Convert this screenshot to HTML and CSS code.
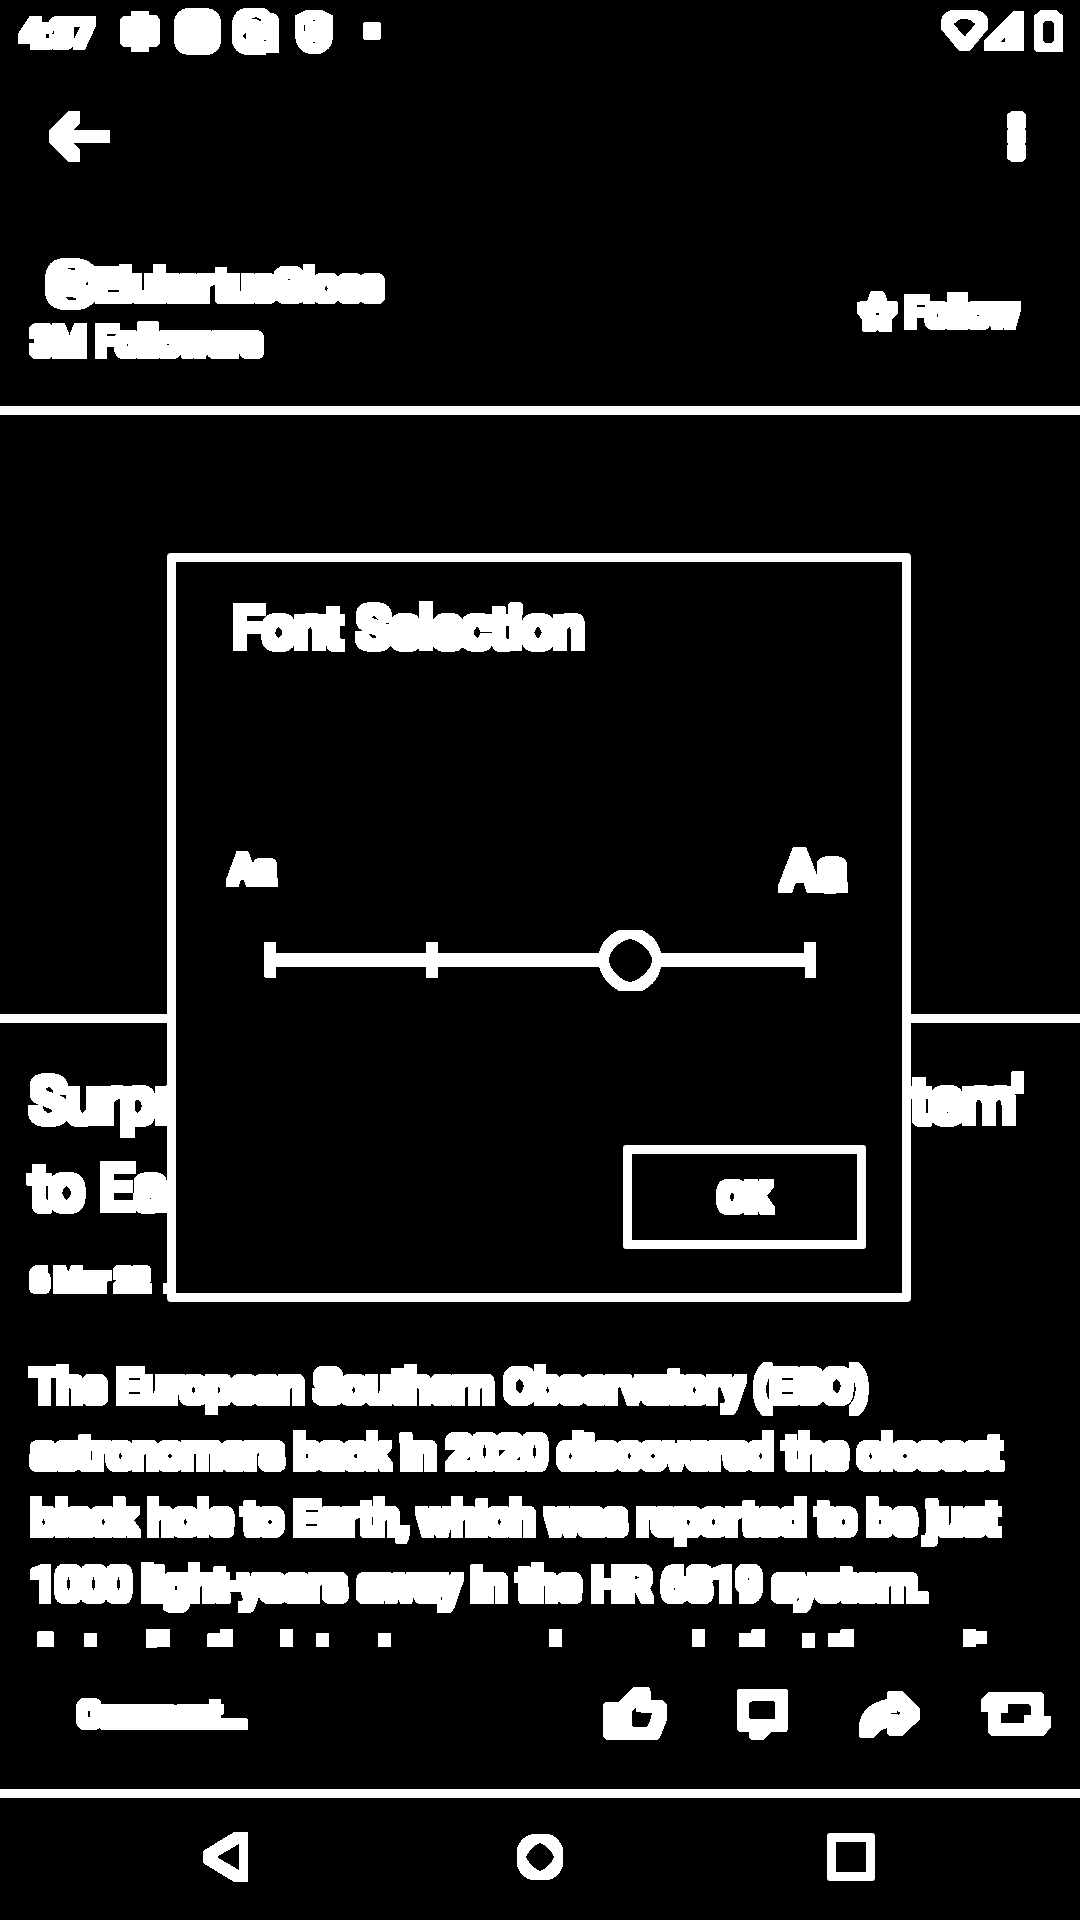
FILE: index.html
```html
<!DOCTYPE html>
<html lang="en">
<head>
<meta charset="utf-8">
<title>Font Selection</title>
<link rel="stylesheet" href="styles.css">
</head>
<body>
<svg class="defs" width="0" height="0" aria-hidden="true">
  <filter id="thick" x="-10%" y="-30%" width="120%" height="160%">
    <feMorphology operator="dilate" radius="4"/>
    <feComponentTransfer><feFuncA type="discrete" tableValues="0 1 1 1"/></feComponentTransfer>
  </filter>
</svg>
<div class="screen">
  <header class="status">
    <span class="time thick">4:37</span>
    <svg class="notices" width="261" height="60" viewBox="360 0 783 180">
      <path d="M393 33H447V46H470L480 58V132L470 142H447V156H393V142H370L360 132V58L370 48H393Z"/>
      <path d="M565 24H621Q662 30 663 68V122Q660 160 621 165H565Q524 160 522 122V68Q526 28 565 24Z"/>
      <path fill-rule="evenodd" d="M738 24H794L812 38L828 42L837 56V159H799V165H738Q700 158 696 122V68Q702 28 738 24ZM756 56L768 51L783 59V63L768 58ZM729 108L738 98V120ZM791 120H797V124H791Z"/>
      <path fill-rule="evenodd" d="M918 30H966L998 46V118Q994 150 960 162H926Q890 150 885 112V46ZM912 75H915V94H912ZM938 60H945V63H938ZM938 126H945V129H938Z"/>
      <rect x="1089" y="66" width="54" height="54" rx="9"/>
    </svg>
    <svg class="signals" width="124" height="60" viewBox="180 0 372 180">
      <path fill-rule="evenodd" d="M216 30H291Q322 38 324 60V87L270 153H237L183 87V60Q188 36 216 30ZM221 72L240 58Q254 54 270 60L286 72L254 110Z"/>
      <path fill-rule="evenodd" d="M399 33H432V153H312V120ZM375 113V126H362Z"/>
      <path fill-rule="evenodd" d="M480 30H531L537 39L549 45V156H468L462 148V45L474 39ZM497 64L489 70V122L497 129H515L522 122V70L515 64Z"/>
    </svg>
  </header>

  <nav class="appbar">
    <svg width="61" height="51" viewBox="147 333 183 153">
      <path d="M207 333H240V369L220 390H327L330 393V426L327 429H220L240 450V486H207L147 427V390Z"/>
    </svg>
    <svg width="20" height="51" viewBox="380 330 60 153">
      <path d="M393 330H426L438 340V381H435V387H438V426H435V432H438V473L428 483H393L381 473V432H384V426H381V387H384V381H381V340Z"/>
    </svg>
  </nav>

  <section class="profile">
    <div class="who">
      <div class="handle">
        <svg width="51" height="52" viewBox="135 54 153 156">
          <path fill-rule="evenodd" d="M190 54H234Q268 58 288 84V180Q268 208 234 210H190Q138 204 135 156V112Q140 58 190 54ZM198 88L210 83L226 85V89ZM198 172L212 170L228 176V179H204ZM258 129L264 126V134H258Z"/>
        </svg>
        <span class="name thick">ElukertusGloss</span>
      </div>
      <div class="followers thick">3M Followers</div>
    </div>
    <div class="follow">
      <svg width="41" height="41" viewBox="168 93 123 123">
        <path fill-rule="evenodd" d="M212 93H246L252 100L260 123H288L291 127V160L273 178V216H234L229 211L224 216H186L183 213V178L168 160V126H178V123H198L207 98ZM225 159H234V165H225Z"/>
      </svg>
      <span class="thick">Follow</span>
    </div>
  </section>

  <div class="picture"></div>

  <article>
    <h1 class="thick"><span class="wide">Surprise! Closest 'black hole system'</span><br>to Earth isn't one</h1>
    <p class="date thick">6 Mar 22<span class="dot">.</span></p>
    <p class="copy thick">The European Southern Observatory (ESO)<br>astronomers back in 2020 discovered the closest<br>black hole to Earth, which was reported to be just<br>1000 light-years away in the HR 6819 system.</p>
    <svg class="next" width="1080" height="19" viewBox="0 866 3240 57">
      <path d="M111 877L116 873H157L162 877V921H111ZM252 879H291V921H252ZM438 867H510V921H472V923H441L438 920ZM621 882L624 879H661V867H699V921H624L621 917ZM840 867H879V921H840ZM948 879H987V921H948ZM1134 879H1173V921H1134ZM1647 867H1686V921H1647ZM2076 867H2115V921H2076ZM2217 879H2254V870L2258 867H2295V921H2217ZM2406 879H2446V923H2406ZM2484 879H2521V870L2525 867H2561V921H2484ZM2889 867H2929V873H2961V912H2929V921H2889Z"/>
    </svg>
  </article>

  <footer class="actions">
    <span class="comment thick">Comment...</span>
    <svg width="64" height="53" viewBox="129 81 192 159">
      <path fill-rule="evenodd" d="M220 81H267L273 96V120H308L321 132V180L300 232L292 240H138L129 230V132L135 126H177ZM216 153L227 144L230 157L276 159L270 183L261 201H220L216 197Z"/>
    </svg>
    <svg width="51" height="51" viewBox="531 87 153 153">
      <path fill-rule="evenodd" d="M535 87H680L684 91V209L680 215H635L609 240H573L567 234V215H537L531 209V91ZM577 123L567 130V172L572 177H645V128L640 123Z"/>
    </svg>
    <svg width="61" height="47" viewBox="897 93 183 141">
      <path fill-rule="evenodd" d="M987 93H1027L1080 146V178L1027 228H987L981 222V204L960 213L939 234H900L897 231V192Q908 132 981 117V98ZM993 158H1010V153L1023 159L1015 165V161H993Z"/>
    </svg>
    <svg width="70" height="44" viewBox="1263 96 210 132">
      <path fill-rule="evenodd" d="M1284 96H1443L1452 104V168H1473V203L1450 228H1294L1284 219V156H1263V120ZM1344 132V158H1323V189H1392V165H1413V138L1405 132Z"/>
    </svg>
  </footer>

  <div class="navbar">
    <svg width="45" height="50" viewBox="609 516 135 150">
      <path fill-rule="evenodd" d="M702 516H741L744 519V666H702L609 609V573ZM717 552L650 591L717 630Z"/>
    </svg>
    <svg class="home" width="46" height="46" viewBox="111 162 138 138">
      <path fill-rule="evenodd" d="M156 162H208Q236 170 249 204V258Q238 290 208 300H152Q122 290 111 258V204Q122 172 156 162ZM180 188Q150 204 138 231Q150 258 180 273Q210 260 222 231Q210 202 180 188Z"/>
    </svg>
    <span class="recents"></span>
  </div>

  <div class="dialog">
    <h2 class="thick">Font Selection</h2>
    <div class="sizes"><span class="small thick">Aa</span><span class="large thick">Aa</span></div>
    <svg class="slider" width="552" height="61" viewBox="0 0 552 61">
      <path fill-rule="evenodd" d="M0 12H12V23H162V12H174V23H335Q338 8 355 0H378Q394 8 397 23H540V12H552V48H541V37H397Q394 53 378 61H355Q340 53 335 37H174V48H162V37H12V48H1L0 46ZM366 9C355 11 345 22 345 30C345 39 357 51 366 52C375 51 388 39 388 30C388 22 377 11 366 9Z"/>
    </svg>
    <button class="ok"><span class="thick">OK</span></button>
  </div>
</div>
</body>
</html>
```
FILE: styles.css
```css
* { box-sizing: border-box; }
body { margin: 0; background: #000; }
h1, h2, p { margin: 0; font-weight: 400; }
svg { display: block; flex: none; fill: #fff; shape-rendering: crispEdges; }
.defs { position: absolute; }
.thick { filter: url(#thick); white-space: nowrap; }

.screen {
  position: relative;
  width: 1080px;
  height: 1920px;
  overflow: hidden;
  display: flex;
  flex-direction: column;
  background: #000;
  color: #fff;
  font-family: Roboto, sans-serif;
}

.status { display: flex; height: 60px; flex: none; padding: 0 16px 0 21px; }
.time { width: 99px; font-size: 37.5px; line-height: 44px; padding-top: 11px; }
.signals { margin-left: auto; }

.appbar {
  display: flex;
  justify-content: space-between;
  flex: none;
  height: 198px;
  padding: 50.5px 53px 0 49px;
}

.profile {
  display: flex;
  justify-content: space-between;
  flex: none;
  height: 157px;
  padding: 0 62px 0 30px;
  border-bottom: 9px solid #fff;
}
.handle { display: flex; height: 62px; padding-left: 15px; }
.name { font-size: 43px; line-height: 50px; padding-top: 2px; }
.followers { padding-left: 1px; font-size: 38.5px; line-height: 44px; }
.follow { display: flex; gap: 8px; padding-top: 33px; font-size: 38.5px; }
.follow span { line-height: 44px; height: 44px; }

.picture { flex: none; height: 608px; border-bottom: 9px solid #fff; }

article { flex: none; height: 627px; padding-top: 35px; }
h1 { padding-left: 30px; font-size: 61px; line-height: 87px; }
.wide { word-spacing: 2.9px; }
.date { margin-top: 28px; padding-left: 31px; font-size: 30px; line-height: 40px; }
.dot { margin-left: 16px; }
.copy { margin-top: 54px; padding-left: 31px; font-size: 44.5px; line-height: 66px; }
.next { margin-top: 11px; }

.actions {
  display: flex;
  flex: none;
  height: 148px;
  padding: 37px 29px 0 78px;
  border-bottom: 9px solid #fff;
}
.comment { width: 525px; font-size: 32.6px; line-height: 40px; margin-top: 8px; height: 40px; }
.actions svg:nth-of-type(2) { margin: 2px 0 0 70px; }
.actions svg:nth-of-type(3) { margin: 4px 0 0 71px; }
.actions svg:nth-of-type(4) { margin: 5px 0 0 61px; }

.navbar {
  display: flex;
  align-items: center;
  justify-content: space-between;
  flex: none;
  height: 118px;
  padding: 0 205px 0 203px;
}
.home { margin-left: 4px; }
.recents { width: 48px; height: 48px; border: 9px solid #fff; border-radius: 3px; }

/* Modal lying over the article */
.dialog {
  position: absolute;
  left: 167px;
  top: 553px;
  width: 744px;
  height: 749px;
  padding: 35px 36px 0 54px;
  border: 9px solid #fff;
  border-radius: 4px;
  background: #000;
}
h2 { margin-left: 3px; font-size: 55.3px; line-height: 64px; }
.sizes { display: flex; justify-content: space-between; align-items: baseline; height: 64px; margin: 177px 19px 0 0; }
.small { font-size: 38px; line-height: 44px; position: relative; top: -6px; }
.large { font-size: 54.5px; line-height: 64px; }
.slider { margin: 28px 0 0 34px; }
.ok {
  display: flex;
  align-items: center;
  justify-content: center;
  width: 243px;
  height: 104px;
  margin: 154px 0 0 auto;
  padding: 0;
  border: 9px solid #fff;
  border-radius: 3px;
  background: #000;
  color: #fff;
  font: 500 39.5px Roboto, sans-serif;
}
```
